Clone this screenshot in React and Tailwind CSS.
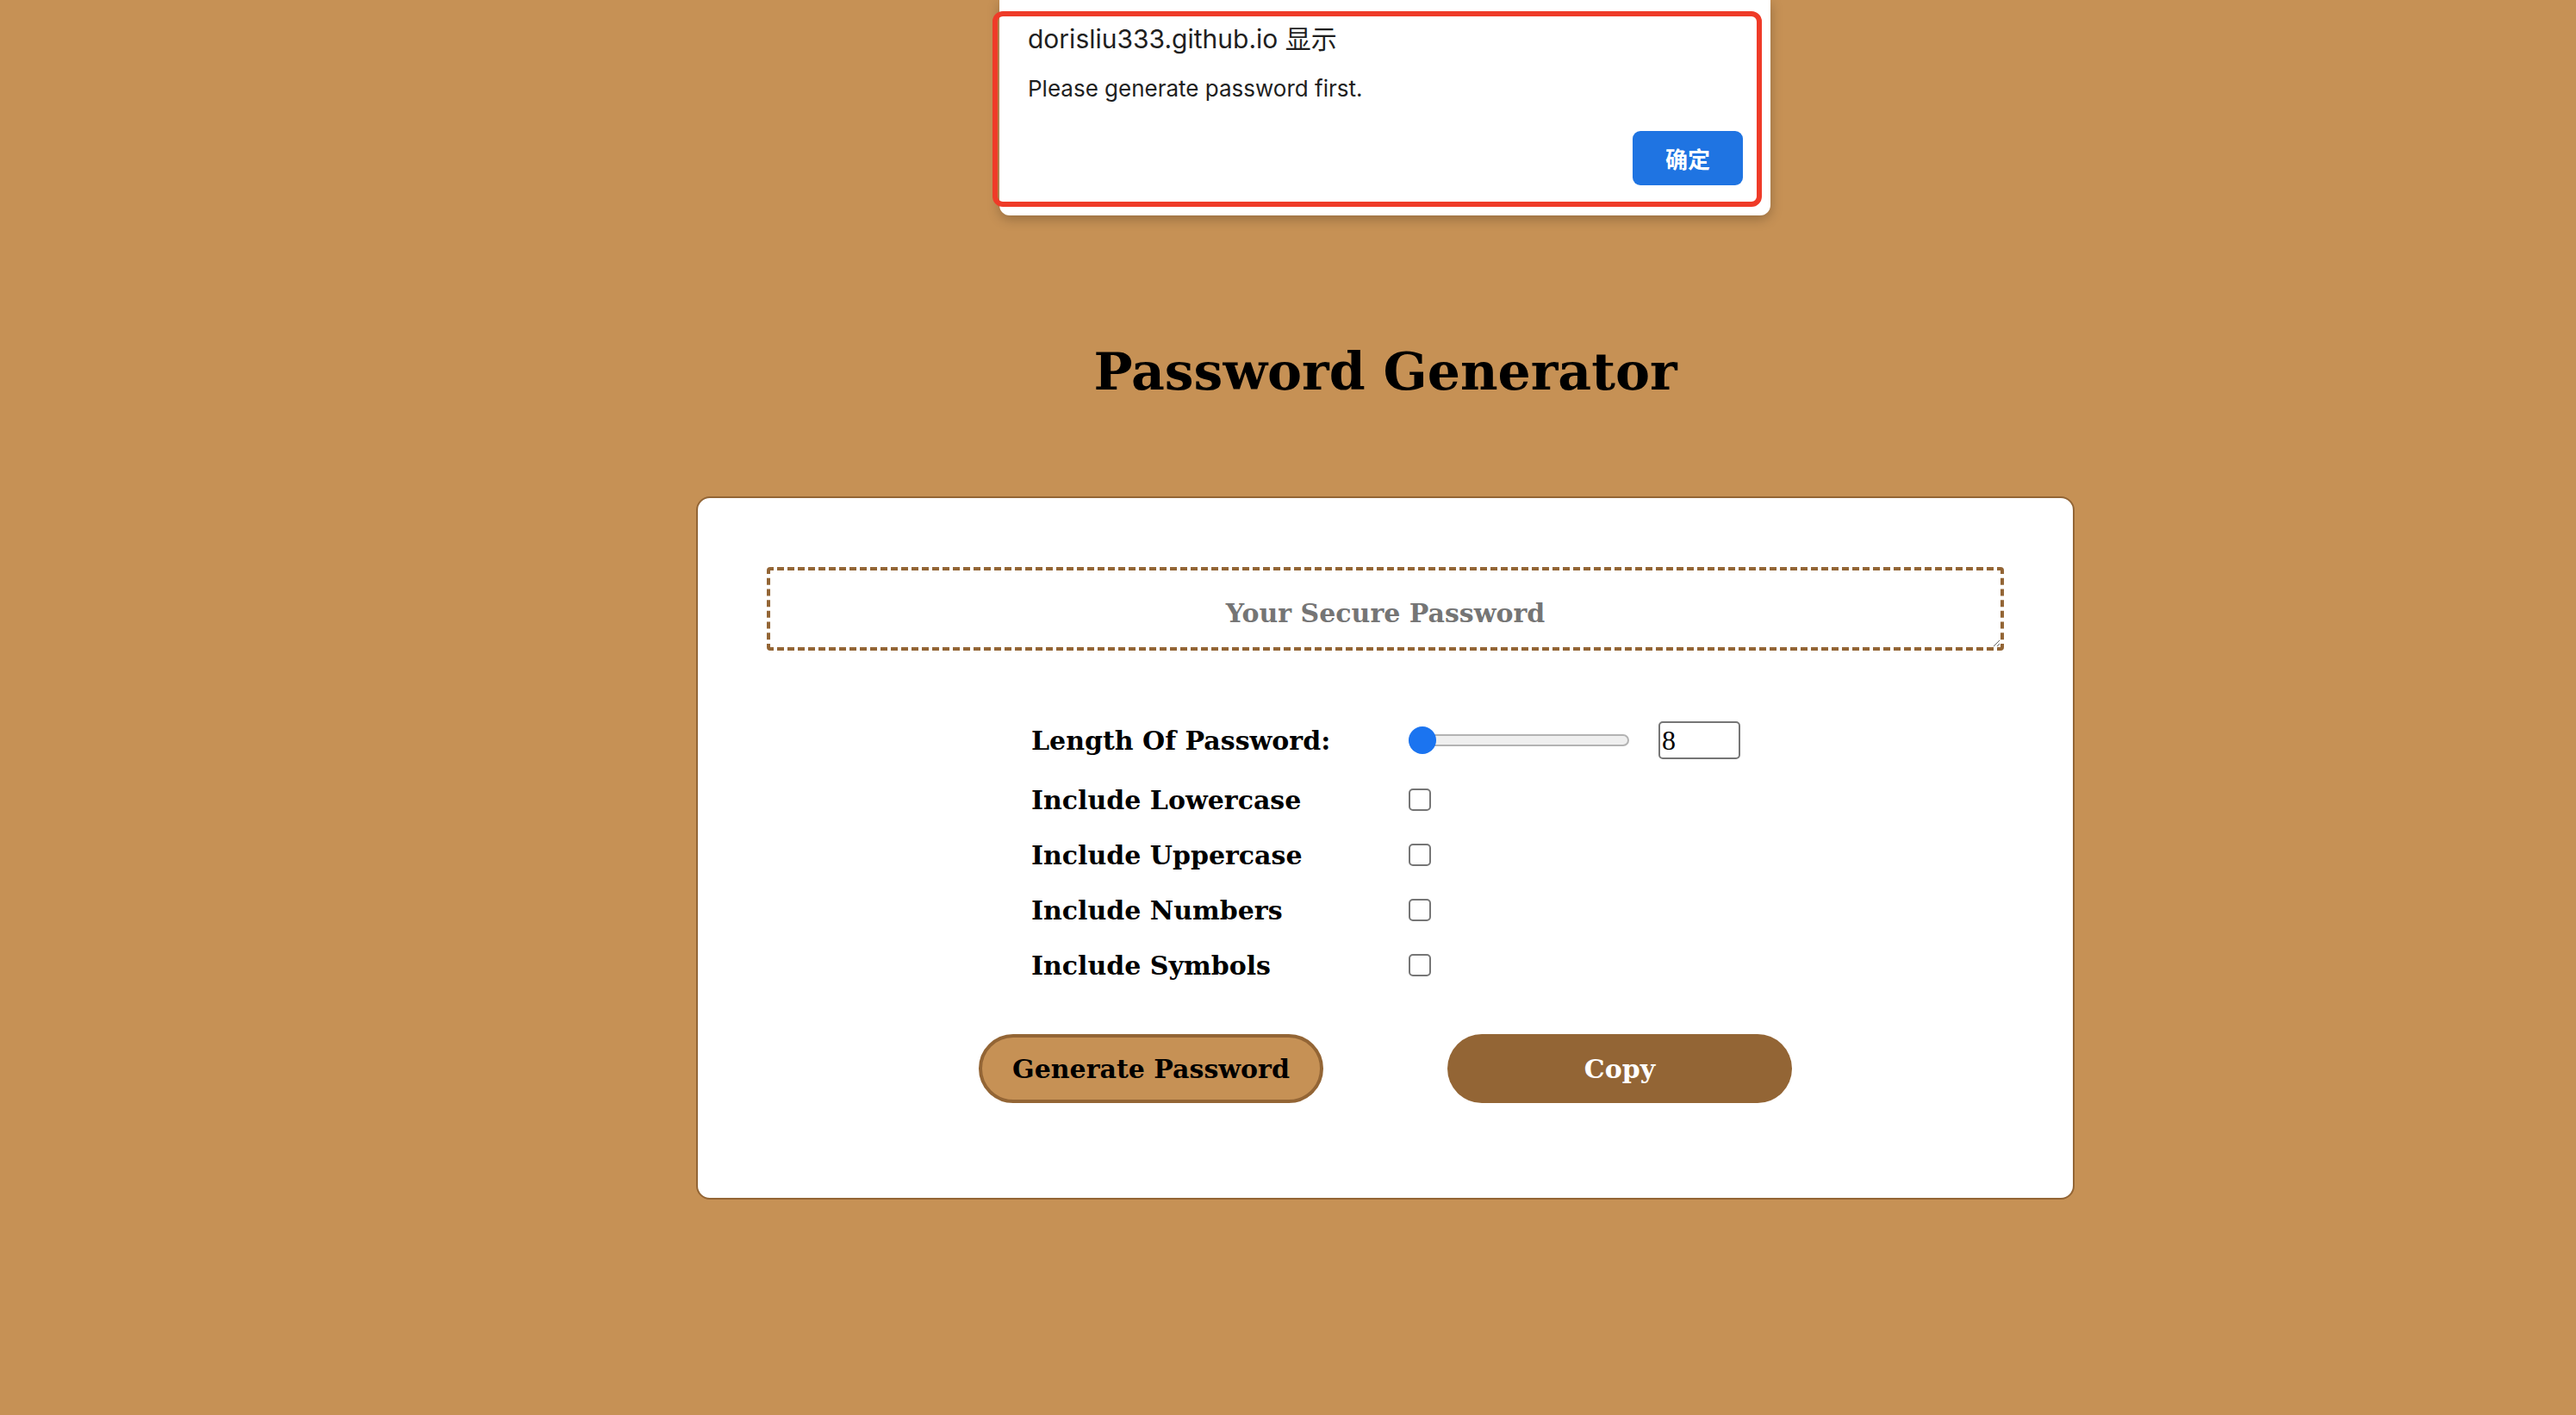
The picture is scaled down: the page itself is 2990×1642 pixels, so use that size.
import { useState } from 'react';

const serif = { fontFamily: '"DejaVu Serif", Georgia, serif' };

const AlertDialog = () => (
  <div className="absolute left-[1160px] top-0 h-[250px] w-[895px] rounded-b-[12px] bg-white shadow-[0_4px_14px_rgba(0,0,0,0.25)]">
    {/* red highlight drawn over the alert */}
    <div className="absolute left-[-8px] top-[13px] h-[227px] w-[893px] rounded-[12px] border-[6px] border-[#ef3b28]" />
    <div
      className="flex h-full flex-col pl-[33px] pr-[32px] pt-[27px]"
      style={{ fontFamily: 'Inter, "Noto Sans CJK SC", sans-serif' }}
    >
      <p className="text-[30px] leading-[36px] text-[#1f1f1f]">dorisliu333.github.io 显示</p>
      <p className="mt-[24px] text-[26px] leading-[31px] text-[#1f1f1f]">Please generate password first.</p>
      <div className="mt-[34px] flex justify-end">
        <button
          type="button"
          className="h-[63px] w-[128px] rounded-[9px] bg-[#1f74e2] text-[26px] font-bold text-white"
          style={{ fontFamily: '"Noto Sans CJK SC", sans-serif' }}
        >
          确定
        </button>
      </div>
    </div>
  </div>
);

const options = [
  { key: 'lower', label: 'Include Lowercase' },
  { key: 'upper', label: 'Include Uppercase' },
  { key: 'numbers', label: 'Include Numbers' },
  { key: 'symbols', label: 'Include Symbols' },
];

const App = () => {
  const [length, setLength] = useState(8);
  const [checked, setChecked] = useState({});

  return (
    <div className="relative min-h-screen w-full bg-[#c69155]">
      <AlertDialog />

      <main className="flex flex-col items-center pb-[120px] pl-[226px] pt-[397px]">
        <h1 className="m-0 text-[60px] font-bold leading-[68px] text-black" style={serif}>
          Password Generator
        </h1>

        <section className="mt-[111px] w-[1600px] rounded-[16px] border-2 border-[#936535] bg-white px-[80px] pb-[110px] pt-[80px]">
          <textarea
            readOnly
            placeholder="Your Secure Password"
            className="block h-[97px] w-full resize rounded-[4px] border-4 border-dashed border-[#936535] bg-white pt-[30px] text-center text-[30px] font-bold leading-[40px] text-black outline-none placeholder:text-[#757575]"
            style={serif}
          />

          <div className="mt-[67px] flex justify-center">
            <div className="w-[822px]" style={serif}>
              <div className="grid h-[74px] grid-cols-[438px_1fr] items-center">
                <label className="text-[30px] font-bold text-black">Length Of Password:</label>
                <div className="flex items-center gap-[34px]">
                  <div className="relative flex h-[32px] w-[256px] items-center">
                    <div className="h-[14px] w-full rounded-full border-2 border-[#b3b3b3] bg-[#efefef]" />
                    <div className="absolute left-0 top-0 h-[32px] w-[32px] rounded-full bg-[#1b74f0]" />
                  </div>
                  <input
                    type="number"
                    value={length}
                    onChange={(e) => setLength(e.target.value)}
                    className="h-[44px] w-[95px] rounded-[5px] border-2 border-[#767676] bg-white pl-[2px] text-[32px] leading-none text-black outline-none"
                    style={{ fontFamily: '"Liberation Serif", serif' }}
                  />
                </div>
              </div>

              {options.map((opt) => (
                <div key={opt.key} className="grid h-[64px] grid-cols-[438px_1fr] items-center">
                  <label className="text-[30px] font-bold text-black">{opt.label}</label>
                  <div className="flex items-center">
                    <input
                      type="checkbox"
                      checked={!!checked[opt.key]}
                      onChange={() => setChecked((prev) => ({ ...prev, [opt.key]: !prev[opt.key] }))}
                      className="m-0 h-[26px] w-[26px] appearance-none rounded-[5px] border-2 border-[#767676] bg-white"
                    />
                  </div>
                </div>
              ))}
            </div>
          </div>

          <div className="mt-[48px] flex justify-center gap-[144px]" style={serif}>
            <button
              type="button"
              className="h-[80px] w-[400px] rounded-full border-4 border-[#936535] bg-[#c69155] text-[30px] font-bold text-black"
            >
              Generate Password
            </button>
            <button
              type="button"
              className="h-[80px] w-[400px] rounded-full bg-[#936535] text-[30px] font-bold text-white"
            >
              Copy
            </button>
          </div>
        </section>
      </main>
    </div>
  );
};

export default App;
